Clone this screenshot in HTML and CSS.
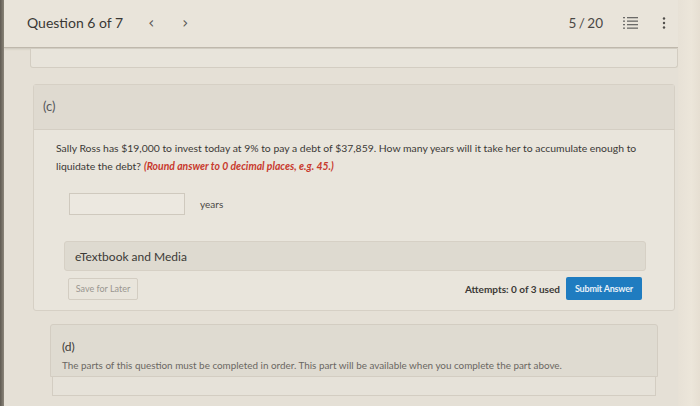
FILE: index.html
```html
<!DOCTYPE html>
<html>
<head>
<meta charset="utf-8">
<link rel="stylesheet" href="styles.css">
</head>
<body>
<div class="frame">
  <div class="edge"></div>
  <div class="screen">
    <header class="topbar">
      <div class="tb-left">
        <span class="qtitle">Question 6 of 7</span>
        <span class="chev">&lsaquo;</span>
        <span class="chev chev-r">&rsaquo;</span>
      </div>
      <div class="tb-right">
        <span class="count">5 / 20</span>
        <svg class="listicon" width="16" height="14" viewBox="0 0 16 14">
          <g fill="#6b6a68">
            <rect x="0" y="1" width="2" height="1.3"/>
            <rect x="0" y="4.5" width="2" height="1.3"/>
            <rect x="0" y="8" width="2" height="1.3"/>
            <rect x="0" y="11.5" width="2" height="1.3"/>
            <rect x="4" y="1" width="11" height="1.3"/>
            <rect x="4" y="4.5" width="11" height="1.3"/>
            <rect x="4" y="8" width="11" height="1.3"/>
            <rect x="4" y="11.5" width="11" height="1.3"/>
          </g>
        </svg>
        <svg class="kebab" width="4" height="14" viewBox="0 0 4 14">
          <g fill="#4f4d4a">
            <circle cx="2" cy="2.5" r="1.2"/>
            <circle cx="2" cy="7" r="1.2"/>
            <circle cx="2" cy="11.5" r="1.2"/>
          </g>
        </svg>
      </div>
    </header>
    <div class="content">
      <div class="toppanel"></div>
      <section class="part">
        <div class="part-head">(c)</div>
        <div class="part-body">
          <div class="qtext"><span class="q1">Sally Ross has $19,000 to invest today at 9% to pay a debt of $37,859. How many years will it take her to accumulate enough to</span><span class="q2">liquidate the debt?</span><span class="hint">(Round answer to 0 decimal places, e.g. 45.)</span></div>
          <div class="answer">
            <div class="inputbox"></div>
            <span class="unit">years</span>
          </div>
          <div class="media">eTextbook and Media</div>
          <div class="actions">
            <button class="save">Save for Later</button>
            <div class="act-right">
              <span class="attempts">Attempts: 0 of 3 used</span>
              <button class="submit">Submit Answer</button>
            </div>
          </div>
        </div>
      </section>
      <section class="part-d">
        <div class="d-head">
          <div class="d-label">(d)</div>
          <div class="d-text">The parts of this question must be completed in order. This part will be available when you complete the part above.</div>
        </div>
        <div class="d-foot"></div>
      </section>
    </div>
  </div>
  <div class="glare"></div>
</div>
</body>
</html>
```
FILE: styles.css
```css
html, body {
  margin: 0;
  padding: 0;
}
body {
  width: 700px;
  height: 406px;
  overflow: hidden;
  background: #e4dfd5;
  font-family: Lato, "Open Sans", sans-serif;
  color: #3b3936;
}
.frame {
  display: flex;
  width: 700px;
  height: 406px;
}
.edge {
  width: 4px;
  background: linear-gradient(90deg, #5f5a52, #8b857a);
  flex: none;
}
.screen {
  flex: 1;
  display: flex;
  flex-direction: column;
  background: #e5e0d6;
}
.glare {
  width: 22px;
  flex: none;
  background: linear-gradient(90deg, #e7e1d6, #ece6da 60%, #e6dfd2);
}
.topbar {
  height: 47px;
  flex: none;
  display: flex;
  align-items: center;
  justify-content: space-between;
  background: #e9e4da;
  border-bottom: 1px solid #bfb8ac;
  box-shadow: 0 1px 2px rgba(120,110,95,0.25);
  padding: 0 0 0 23px;
}
.tb-left {
  display: flex;
  align-items: center;
  margin-top: -2px;
}
.qtitle {
  font-size: 14px;
  color: #3a3835;
}
.chev {
  font-size: 15px;
  color: #5a5855;
  margin-left: 25px;
  font-family: "DejaVu Sans", sans-serif;
}
.chev-r {
  margin-left: 28px;
}
.tb-right {
  display: flex;
  align-items: center;
  margin-right: 12px;
  margin-top: -2px;
}
.count {
  font-size: 13.5px;
  color: #4a4845;
  word-spacing: -1px;
}
.listicon {
  margin-left: 20px;
}
.kebab {
  margin-left: 23px;
}
.content {
  display: flex;
  flex-direction: column;
  padding-left: 26px;
  width: 648px;
}
.toppanel {
  height: 18px;
  margin-top: 1px;
  background: #e8e4db;
  border: 1px solid #d3cdc2;
  border-top: none;
  border-radius: 0 0 3px 3px;
}
.part {
  margin-top: 16px;
  margin-left: 3px;
  width: 640px;
  border: 1px solid #d6d0c5;
  border-radius: 3px;
  background: #e9e5dc;
}
.part-head {
  height: 45px;
  background: #dfdad0;
  border-bottom: 1px solid #d4cec3;
  font-size: 13px;
  color: #56585c;
  padding: 13px 0 0 9px;
  box-sizing: border-box;
}
.part-body {
  padding: 9px 0 10px 22px;
}
.qtext {
  display: flex;
  flex-wrap: wrap;
  font-size: 10.4px;
  line-height: 18px;
  color: #3b3936;
  width: 600px;
}
.q1 {
  flex: 0 0 100%;
}
.hint {
  color: #c8392d;
  font-weight: bold;
  font-style: italic;
  margin-left: 3px;
}
.answer {
  display: flex;
  align-items: center;
  margin-top: 18px;
  margin-left: 13px;
}
.inputbox {
  width: 114px;
  height: 20px;
  border: 1px solid #cfc9be;
  background: #ece8e0;
}
.unit {
  font-size: 10px;
  color: #4a4845;
  margin-left: 15px;
}
.media {
  margin-top: 26px;
  margin-left: 8px;
  width: 570px;
  height: 28px;
  display: flex;
  align-items: center;
  padding-left: 10px;
  background: #dedad0;
  border: 1px solid #d6d0c5;
  border-radius: 3px;
  font-size: 12px;
  color: #3b3936;
}
.actions {
  display: flex;
  align-items: center;
  justify-content: space-between;
  margin-top: 6px;
  margin-left: 12px;
  width: 574px;
}
.save {
  font-family: Lato, sans-serif;
  font-size: 9px;
  color: #9a9690;
  background: #e9e5dc;
  border: 1px solid #d3cdc2;
  border-radius: 2px;
  width: 70px;
  height: 22px;
  padding: 0;
}
.act-right {
  display: flex;
  align-items: center;
}
.attempts {
  font-size: 10px;
  font-weight: bold;
  color: #3b3936;
  margin-right: 6px;
}
.submit {
  font-family: Lato, sans-serif;
  font-size: 9px;
  font-weight: bold;
  color: #e8f1f8;
  background: #1f7cc0;
  border: none;
  border-radius: 2px;
  width: 76px;
  height: 23px;
  padding: 0;
  letter-spacing: -0.2px;
}
.part-d {
  margin-top: 13px;
  margin-left: 20px;
  width: 608px;
}
.d-head {
  height: 53px;
  background: #dfdbd1;
  border: 1px solid #d3cdc2;
  border-radius: 3px 3px 0 0;
  padding: 14px 0 0 11px;
  box-sizing: border-box;
}
.d-label {
  font-size: 12px;
  color: #3b3936;
}
.d-text {
  font-size: 9.9px;
  color: #6a6762;
  margin-top: 5px;
}
.d-foot {
  height: 18px;
  margin: 0 2px;
  background: #e6e2d9;
  border: 1px solid #d3cdc2;
  border-top: none;
}
```
